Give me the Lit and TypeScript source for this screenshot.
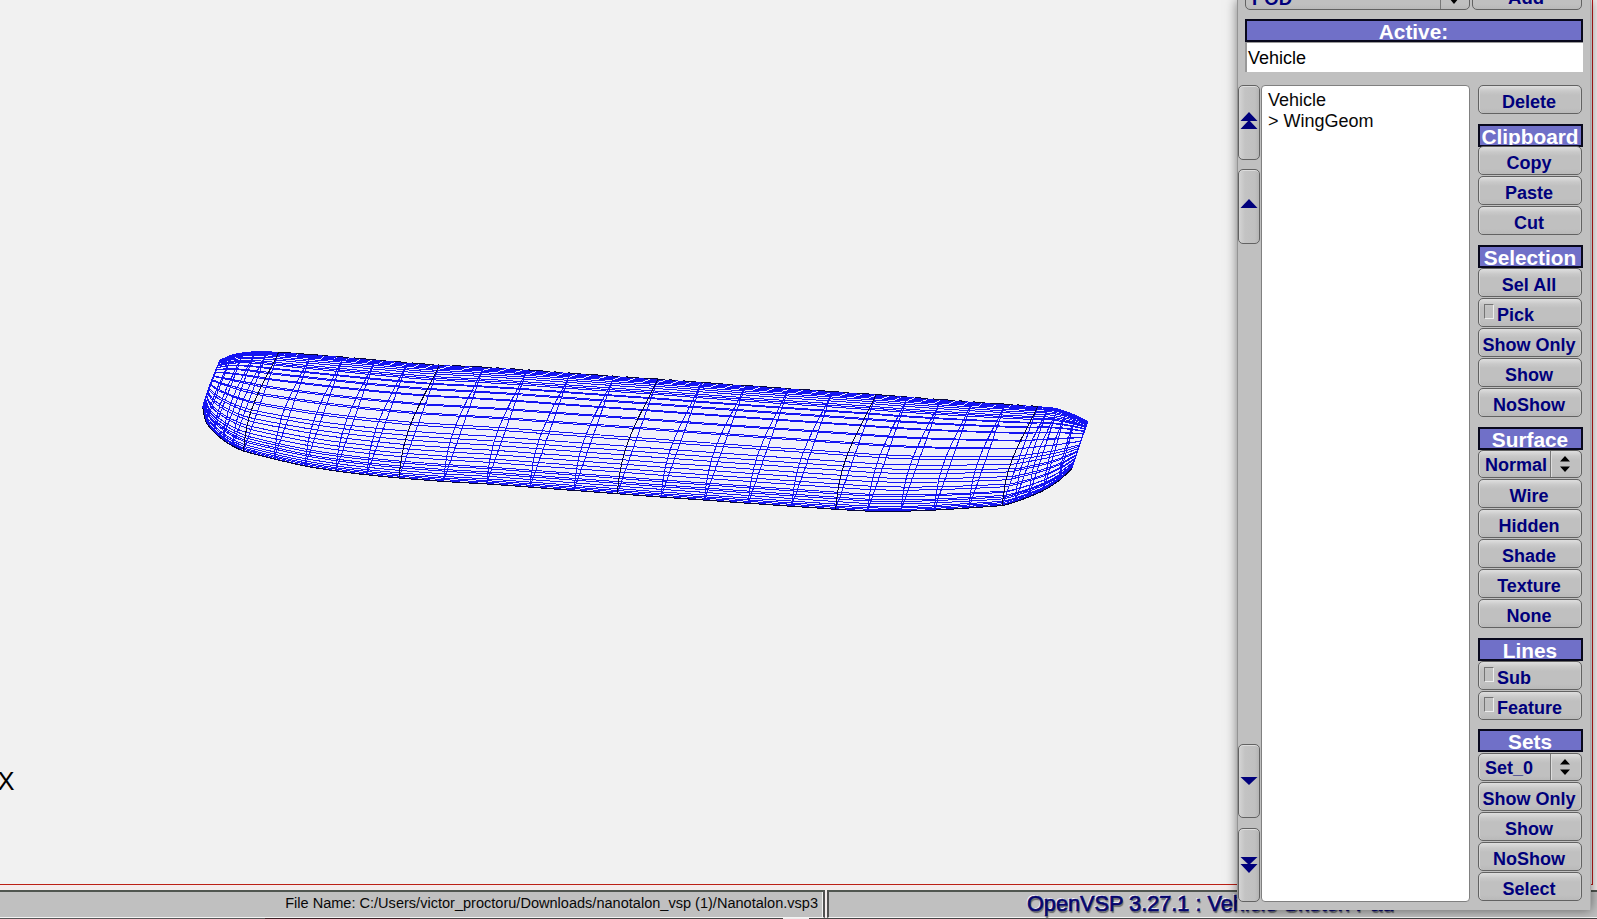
import { LitElement, html, svg, css } from "lit";
import { customElement, property } from "lit/decorators.js";

type P = [number, number];

// Wing sections, tip to tip: upper edge, lower edge, bow of the near surface.
const SECTIONS: [number, number, number, number, number, boolean?][] = [
  [220, 360, 202.7, 407, 1],
  [232.5, 355, 206, 421.5, 2],
  [243.5, 352.7, 213.5, 431, 3.5],
  [255, 351.8, 222.5, 439, 5],
  [267, 351.8, 232.5, 445.5, 6],
  [278.5, 352.5, 243.5, 450.5, 6.5, true],
  [310.7, 355, 274, 458.5, 7],
  [343.3, 357.5, 305, 465.5, 7],
  [375, 360.3, 335.7, 470.5, 7],
  [407.3, 363, 366.7, 474.3, 7.3],
  [439.3, 365.5, 399, 477.5, 7.5, true],
  [483.5, 367.6, 443.5, 481, 7.5],
  [526.7, 370.3, 486.7, 483.5, 7.5],
  [570, 373.5, 530, 486.7, 7.5],
  [614, 376.6, 574, 490, 7.5],
  [657.7, 379.5, 617.2, 493.3, 7.5, true],
  [701.7, 382.8, 661, 496.6, 7.5],
  [745.5, 386, 704.3, 499.6, 7.5],
  [788.5, 389, 748.3, 502.8, 7.5],
  [832.3, 392, 791.7, 505.8, 7.5],
  [876, 395, 835.7, 508.8, 7.5, true],
  [907.3, 397.5, 867.5, 510.6, 7],
  [940.7, 400, 900.7, 510.8, 7],
  [972.3, 402.3, 934.3, 509.6, 7],
  [1005, 404.6, 969, 507.5, 7],
  [1037.7, 406.8, 1002.3, 505, 6.5, true],
  [1048.5, 407.4, 1015, 501.4, 6],
  [1057.5, 408.9, 1028.5, 496.6, 5],
  [1066, 411.6, 1043.5, 490, 3.5],
  [1076, 415.6, 1058.5, 480.5, 2],
  [1087.7, 421.5, 1072, 468, 0.5],
];

const NEAR = [0, 0.02, 0.043, 0.077, 0.114, 0.166, 0.214, 0.271, 0.349, 0.429, 0.506, 0.586, 0.663, 0.743, 0.814, 0.87, 0.937, 0.975, 1];
const FAR = [0.01, 0.03, 0.06, 0.1, 0.129, 0.16, 0.207, 0.266, 0.343, 0.422, 0.534, 0.629, 0.709, 0.786, 0.857, 0.9, 0.915, 0.96, 0.988];

const pointAt = (s: (typeof SECTIONS)[number], f: number, near: boolean): P => [
  s[0] + (s[2] - s[0]) * f - (near ? s[4] * Math.sin(Math.PI * Math.pow(f, 1.2)) : 0),
  s[1] + (s[3] - s[1]) * f,
];
const xy = (x: number, y: number) => x.toFixed(1) + " " + y.toFixed(1);
// Smooth curve through the points; tangents are limited by the shorter neighbour.
const path = (pts: P[]) => {
  const tangent = (i: number): P => {
    if (i === 0 || i === pts.length - 1) return [0, 0];
    const [a, b, c] = [pts[i - 1], pts[i], pts[i + 1]];
    const len = Math.hypot(c[0] - a[0], c[1] - a[1]) || 1;
    const k = Math.min(Math.hypot(b[0] - a[0], b[1] - a[1]), Math.hypot(c[0] - b[0], c[1] - b[1])) / 3;
    return [((c[0] - a[0]) / len) * k, ((c[1] - a[1]) / len) * k];
  };
  let d = "M" + xy(...pts[0]);
  for (let i = 1; i < pts.length; i++) {
    const [p, q] = [pts[i - 1], pts[i]];
    const [t, u] = [tangent(i - 1), tangent(i)];
    d += "C" + xy(p[0] + t[0], p[1] + t[1]) + " " + xy(q[0] - u[0], q[1] - u[1]) + " " + xy(...q);
  }
  return d;
};
const ribs = (near: boolean, dark: boolean) =>
  SECTIONS.filter((s) => !!s[5] === dark)
    .map((s) => path(Array.from({ length: 15 }, (_, i) => pointAt(s, i / 14, near))))
    .join("");
const spans = (fs: number[], near: boolean) => fs.map((f) => path(SECTIONS.map((s) => pointAt(s, f, near)))).join("");

@customElement("wing-mesh")
class WingMesh extends LitElement {
  static styles = css`
    :host { display: block; }
    svg { display: block; }
    path { fill: none; stroke: #1414f2; stroke-width: 1; shape-rendering: crispEdges; }
    .mark { stroke: #050538; }
    .top { stroke: #060640; stroke-dasharray: 13 5 22 4 6 8; }
    .fill { fill: #f0f0fb; stroke: none; }
    .axis { font: 25.5px "Liberation Sans", Arial, sans-serif; fill: #000; }
  `;
  render() {
    const outline = path([
      ...SECTIONS.map((s) => [s[0], s[1]] as P),
      ...SECTIONS.slice().reverse().map((s) => [s[2], s[3]] as P),
    ]);
    return html`<svg width="1593" height="884" viewBox="0 0 1593 884">
      ${svg`
        <path class="fill" d=${outline + "Z"}></path>
        <path d=${spans(FAR, false)}></path>
        <path d=${spans(NEAR, true)}></path>
        <path d=${ribs(false, false) + ribs(false, true) + ribs(true, false)}></path>
        <path class="mark" d=${ribs(true, true)}></path>
        <path class="top" d=${path(SECTIONS.slice(5, 26).map((s) => [s[0], s[1] - 0.5] as P))}></path>
        <path class="mark" d=${path(SECTIONS.map((s) => [s[2], s[3] + 0.5] as P))}></path>
        <text class="axis" x="-2.5" y="790">X</text>`}
    </svg>`;
  }
}

@customElement("vsp-button")
class VspButton extends LitElement {
  @property() label = "";
  @property({ reflect: true }) kind = "push";
  static styles = css`
    :host { display: block; height: 30px; }
    :host([kind="choice"]) { height: 29px; }
    .face {
      box-sizing: border-box; height: 29px; width: 104px; border: 1px solid #626262; border-radius: 5px;
      background: linear-gradient(#dedede, #c9c9c9 5px, #c0c0c0 9px, #c0c0c0 22px, #b9b9b9);
      box-shadow: inset 1px 0 #d6d6d6, inset -1px 0 #cbcbcb;
      display: flex; align-items: center; justify-content: center;
      font: bold 18px/28px "Liberation Sans", Arial, sans-serif; color: #00007c; white-space: nowrap;
    }
    .text { position: relative; top: 2px; left: -1px; }
    .check, .choice { justify-content: flex-start; }
    .check { padding-left: 5px; }
    .box { box-sizing: border-box; width: 10px; height: 15px; margin: -2px 4px 0 0; border: 1px solid #747474; border-right-color: #ededed; border-bottom-color: #ededed; }
    .choice { padding-left: 6px; height: 28px; }
    .choice .text { width: 65px; top: 1px; left: 0; }
    .arrows { border-left: 1px solid #777; box-shadow: inset 1px 0 #ddd; height: 26px; flex: 1; display: flex; align-items: center; justify-content: center; padding-right: 3px; }
  `;
  render() {
    return html`<div class="face ${this.kind}">
      ${this.kind === "check" ? html`<span class="box"></span>` : ""}
      <span class="text">${this.label}</span>
      ${this.kind === "choice"
        ? html`<span class="arrows"><svg width="10" height="16" viewBox="0 0 10 16"><path d="M5 0L10 5.5H0ZM0 10.5H10L5 16Z" /></svg></span>`
        : ""}
    </div>`;
  }
}

const GROUPS: { title: string; cls: string; items: [string, string?][] }[] = [
  { title: "Clipboard", cls: "clipboard", items: [["Copy"], ["Paste"], ["Cut"]] },
  { title: "Selection", cls: "selection", items: [["Sel All"], ["Pick", "check"], ["Show Only"], ["Show"], ["NoShow"]] },
  { title: "Surface", cls: "surface", items: [["Normal", "choice"], ["Wire"], ["Hidden"], ["Shade"], ["Texture"], ["None"]] },
  { title: "Lines", cls: "lines", items: [["Sub", "check"], ["Feature", "check"]] },
  { title: "Sets", cls: "sets", items: [["Set_0", "choice"], ["Show Only"], ["Show"], ["NoShow"], ["Select"]] },
];

@customElement("app-root")
class AppRoot extends LitElement {
  static styles = css`
    :host { display: block; width: 1597px; height: 919px; position: relative; overflow: hidden; background: #f4ecec; font-family: "Liberation Sans", Arial, sans-serif; }
    * { box-sizing: border-box; }
    .main { height: 919px; display: flex; flex-direction: column; }
    .view { width: 1593px; height: 885px; flex: none; background: #f1f1f1; border-right: 1px solid #c01818; border-bottom: 1px solid #bb2015; overflow: hidden; }
    .status { margin-top: 5px; height: 28px; display: flex; flex: none; gap: 2px; }
    .cell { height: 28px; background: #c0c0c0; border-top: 2px solid #505650; border-bottom: 1px solid #f4f4f4; white-space: nowrap; }
    .file { width: 825px; border-right: 2px solid #505050; box-shadow: inset -1px 0 #f0f0f0; text-align: right; padding-right: 5px; font-size: 14.56px; line-height: 22px; color: #080808; }
    .title { flex: 1; border-left: 2px solid #505050; padding-left: 198px; font-size: 21.7px; line-height: 24px; color: #06066e; -webkit-text-stroke: .7px #06066e; text-shadow: -1px -1px #f4f4ff, 1px 2px 1px #666; }
    .under { height: 1px; background: linear-gradient(90deg, #555 265px, #3a2024 265px, #3a2024 410px, #444 410px, #444 783px, #eee 783px, #eee 809px, #444 809px); }
    .panel { position: absolute; left: 1237px; top: 0; width: 354px; height: 910px; background: #c0c0c0; border-left: 1px solid #949494; border-right: 1px solid #a9a9a9; box-shadow: 0 0 11px rgba(0,0,0,.5); display: flex; flex-direction: column; }
    .add-row { margin: -21px 0 0 7px; display: flex; gap: 2px; height: 31px; flex: none; }
    .pod, .add { height: 31px; border: 1px solid #626262; border-radius: 5px; font: bold 18.5px/39px "Liberation Sans", Arial, sans-serif; color: #00007c; background: linear-gradient(#dedede, #c0c0c0 9px, #c0c0c0 24px, #b9b9b9); }
    .pod { width: 225px; padding-left: 6px; display: flex; }
    .pod-name { width: 189px; border-right: 1px solid #777; margin-top: -1px; }
    .pod-arrow { flex: 1; display: flex; justify-content: center; align-items: flex-end; padding: 0 2px 5px 0; }
    .add { width: 110px; text-align: center; line-height: 36px; padding-right: 2px; }
    .band { height: 23px; background: #7070c8; border: 2px solid #08081c; color: #fff; font-weight: bold; font-size: 20.8px; line-height: 22px; text-align: center; white-space: nowrap; flex: none; overflow: hidden; }
    .active { width: 338px; margin: 9px 0 0 7px; padding-right: 1px; }
    .input { width: 338px; height: 30px; margin: 0 0 0 7px; background: #fff; border-top: 1px solid #999; border-left: 2px solid #999; font-size: 18px; line-height: 30px; padding-left: 1px; flex: none; }
    .body { margin-top: 13px; display: flex; height: 817px; }
    .scroll { width: 23px; display: flex; flex-direction: column; }
    .step { width: 22px; height: 75px; border: 1px solid #626262; border-radius: 5px; background: linear-gradient(90deg, #d4d4d4, #c3c3c3 6px, #c0c0c0 16px, #b4b4b4); display: flex; justify-content: center; align-items: center; flex: none; box-shadow: inset 0 1px #ddd; padding: 0 1px 3px 0; }
    .step + .step { margin-top: 9px; }
    .step.down { margin-top: auto; height: 74px; padding-bottom: 0; }
    .step.down + .step.down { margin-top: 10px; }
    .step path { fill: #00007c; }
    .step svg { flex: none; }
    .list { width: 209px; height: 817px; background: #fff; border: 1px solid #808080; border-radius: 4px; padding: 4px 0 0 6px; font-size: 18px; line-height: 21px; color: #080808; }
    .row { white-space: pre; }
    .tools { margin-left: 8px; width: 105px; }
    .delete { height: 39px; display: block; }
    .group .band { width: 105px; padding-right: 1px; }
    .clipboard .band { margin-bottom: -1px; }
    .selection, .surface, .lines { margin-top: 9px; }
    .sets { margin-top: 8px; }
    .sets .band { margin-bottom: 1px; }
    .band span { margin: 0 -4px; }
  `;
  private step(d: string, cls = "") {
    return html`<div class="step ${cls}"><svg width="18" height="18" viewBox="0 0 18 18"><path d=${d} /></svg></div>`;
  }
  render() {
    return html`
      <div class="main">
        <div class="view"><wing-mesh></wing-mesh></div>
        <div class="status">
          <div class="cell file">File Name: C:/Users/victor_proctoru/Downloads/nanotalon_vsp (1)/Nanotalon.vsp3</div>
          <div class="cell title">OpenVSP 3.27.1 : Vehicle Sketch Pad</div>
        </div>
        <div class="under"></div>
      </div>
      <div class="panel">
        <div class="add-row">
          <div class="pod"><span class="pod-name">POD</span><span class="pod-arrow"><svg width="10" height="6"><path d="M0 0H10L5 6Z" /></svg></span></div>
          <div class="add">Add</div>
        </div>
        <div class="band active">Active:</div>
        <div class="input">Vehicle</div>
        <div class="body">
          <div class="scroll">
            ${this.step("M9 0L17.5 9H.5ZM9 8L17.5 17H.5Z")}
            ${this.step("M9 3L17.5 12H.5Z")}
            ${this.step("M.5 5H17.5L9 13Z", "down")}
            ${this.step("M.5 1H17.5L9 9ZM.5 8H17.5L9 17Z", "down")}
          </div>
          <div class="list"><div class="row">Vehicle</div><div class="row">> WingGeom</div></div>
          <div class="tools">
            <vsp-button class="delete" label="Delete"></vsp-button>
            ${GROUPS.map((g) => html`<div class="group ${g.cls}">
              <div class="band"><span>${g.title}</span></div>
              ${g.items.map(([label, kind]) => html`<vsp-button .label=${label} .kind=${kind ?? "push"}></vsp-button>`)}
            </div>`)}
          </div>
        </div>
      </div>`;
  }
}
